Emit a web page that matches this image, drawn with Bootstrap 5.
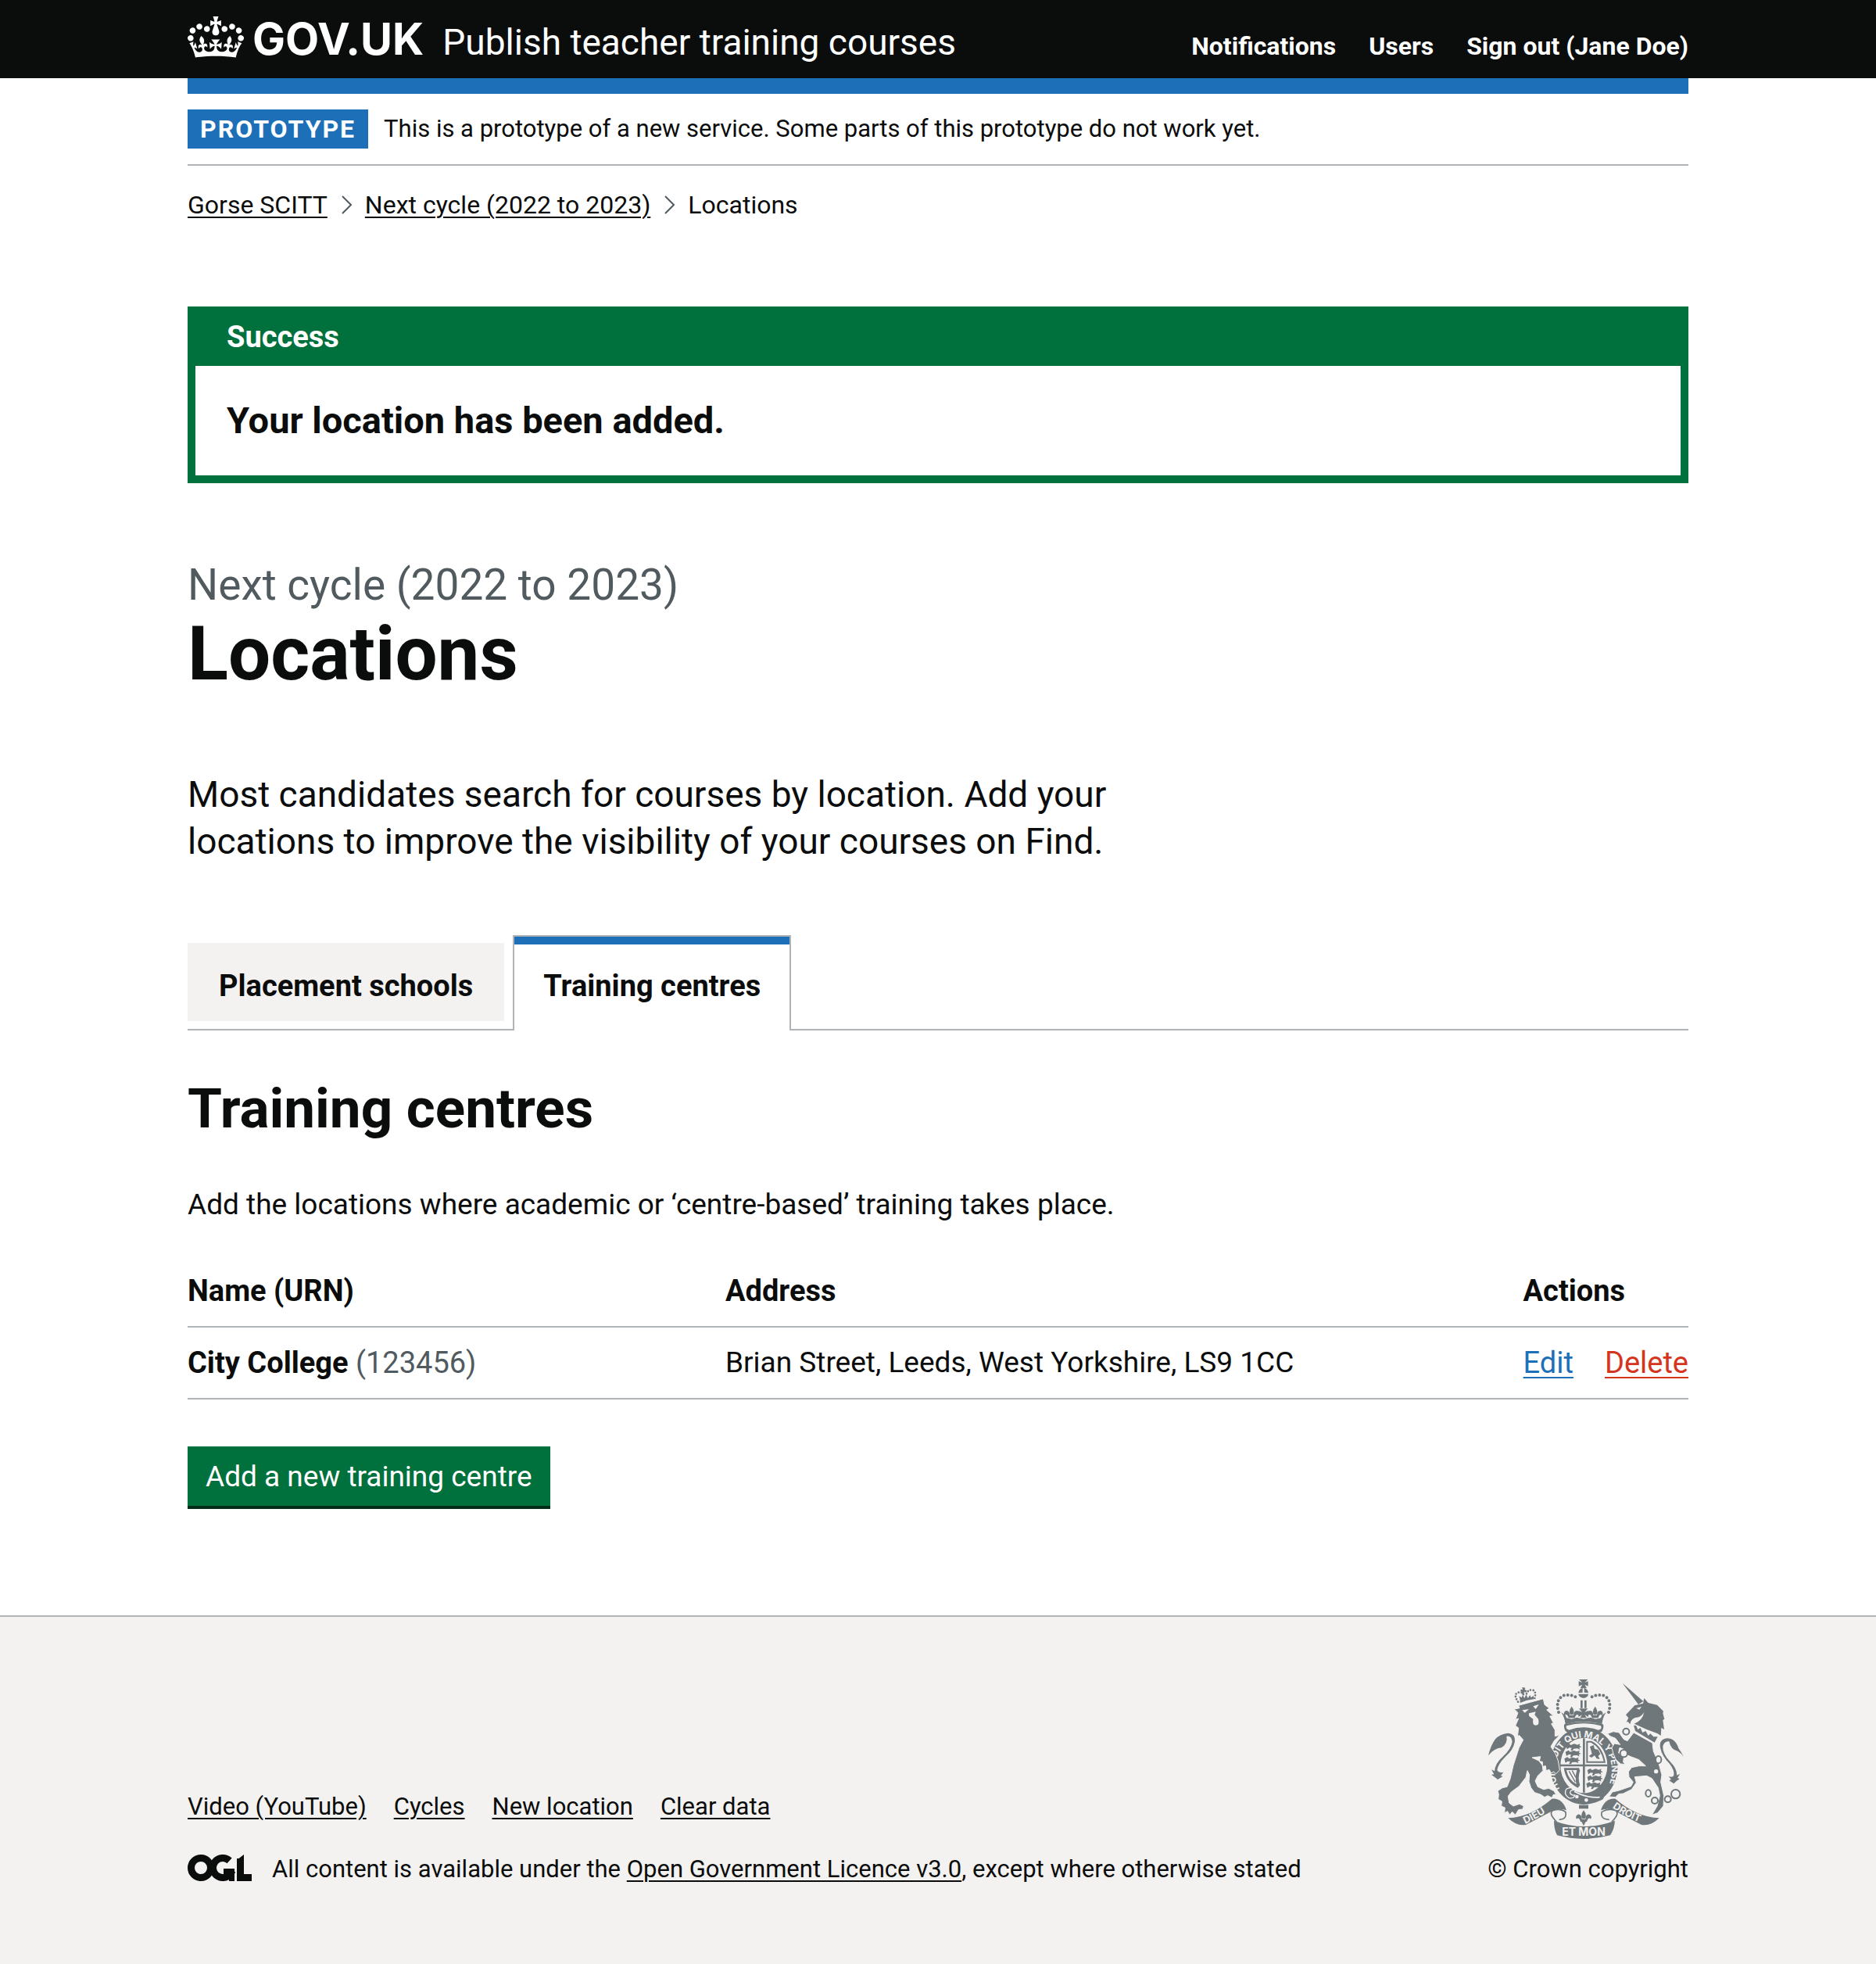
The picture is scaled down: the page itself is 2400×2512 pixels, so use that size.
<!DOCTYPE html>
<html lang="en">
<head>
<meta charset="utf-8">
<meta name="viewport" content="width=device-width, initial-scale=1">
<title>Locations - Publish teacher training courses - GOV.UK</title>
<link rel="stylesheet" href="https://cdn.jsdelivr.net/npm/bootstrap@5.3.0/dist/css/bootstrap.min.css">
<style>
  :root {
    --ink: #0b0c0c;
    --blue: #1d70b8;
    --green: #00703c;
    --red: #d4351c;
    --muted: #505a5f;
    --rule: #b1b4b6;
    --pale: #f3f2f1;
  }
  body {
    font-family: Roboto, "Liberation Sans", sans-serif;
    font-size: 37px;
    line-height: 50px;
    color: var(--ink);
    background: #fff;
  }
  a { color: inherit; text-decoration-thickness: 2px; text-underline-offset: 4px; }
  a:hover { color: inherit; }
  .page-width { width: 80%; margin-inline: auto; }
  .text-s { font-size: 31px; line-height: 40px; }
  .bold-m { font-size: 38px; line-height: 50px; font-weight: 700; }

  .site-header { background: var(--ink); color: #fff; padding: 20px 0; }
  .site-header a { text-decoration: none; }
  .logo-link { gap: 11px; font: 700 56px/60px Inter, sans-serif; }
  .logo-link svg { width: 72px; height: 53px; margin-top: 1px; }
  .service-link { font-size: 46px; line-height: 50px; margin-left: 24px; }
  .site-nav { gap: 42px; font-size: 32px; line-height: 40px; font-weight: 700; }
  .header-bar { height: 20px; background: var(--blue); }

  .phase { gap: 20px; padding: 20px 0; border-bottom: 2px solid var(--rule); }
  .phase p { font-size: 31px; line-height: 50px; }
  .phase-tag { background: var(--blue); color: #fff; font-size: 32px; line-height: 50px; font-weight: 700; letter-spacing: 2px; padding: 0 16px; }

  .crumbs { gap: 17px; padding-top: 30px; font-size: 32px; line-height: 40px; }
  .crumbs li { gap: 18px; }
  .crumbs svg { width: 13px; height: 24px; }

  .notice { margin-top: 110px; border: 10px solid var(--green); border-top: 0; }
  .notice-head { background: var(--green); color: #fff; padding: 14px 40px 12px; }
  .notice-body { padding: 40px; font-size: 47px; line-height: 60px; font-weight: 700; }

  .caption-xl { display: block; margin-bottom: 8px; color: var(--muted); font-size: 55px; line-height: 60px; font-weight: 400; }
  h1 { margin: 100px 0; font-size: 96px; line-height: 100px; font-weight: 700; }
  .intro { font-size: 46px; line-height: 60px; width: 66%; }

  .tab-list { margin-top: 90px; border-bottom: 2px solid var(--rule); }
  .tab-list a { display: block; font-size: 38px; line-height: 60px; font-weight: 700; text-decoration: none; }
  .tab-idle { margin: 10px 11px 10px 0; padding: 25px 40px 15px; background: var(--pale); }
  .tab-current { margin-bottom: -2px; padding: 23px 37px 27px; background: #fff; border: 2px solid var(--rule); border-bottom: 0; box-shadow: inset 0 10px var(--blue); }
  .tab-current a { padding-top: 10px; }

  h2 { margin: 60px 0 58px; font-size: 71px; line-height: 80px; font-weight: 700; }
  .places { margin: 40px 0 60px; width: 100%; }
  .places th, .places td { padding: 20px 0; border-bottom: 2px solid var(--rule); }
  .places thead th { font-size: 38px; }
  .col-name { width: 688px; }
  .col-actions { width: 1%; white-space: nowrap; }
  .places .row-links { gap: 40px; font-size: 38px; }
  .places a { text-underline-offset: 5px; }
  .edit-link, .edit-link:hover { color: var(--blue); }
  .delete-link, .delete-link:hover { color: var(--red); }
  .name-cell { font-size: 38px; font-weight: 400; }
  .urn { color: var(--muted); }
  .add-btn { background: var(--green); color: #fff; border: 0; box-shadow: 0 4px #002d18; padding: 14px 23px 12px; line-height: 50px; }
  main { padding-bottom: 140px; }

  .site-footer { background: var(--pale); border-top: 2px solid var(--rule); padding: 80px 0 96px; }
  .footer-links { gap: 35px; margin-bottom: 35px; }
  .licence { gap: 26px; line-height: 50px; }
  .licence svg { width: 82px; height: 34px; margin-bottom: 4px; }
  .crest-link { text-decoration: none; line-height: 50px; }
  .crest-link svg { display: block; width: 250px; height: 204px; margin: 0 6px 14px auto; }
</style>
<script src="https://cdn.jsdelivr.net/npm/bootstrap@5.3.0/dist/js/bootstrap.bundle.min.js"></script>
</head>
<body>
<header class="site-header">
  <div class="page-width d-flex align-items-baseline">
    <a href="#" class="logo-link d-flex align-items-baseline">
      <svg class="align-self-start" viewBox="0 0 132 97" aria-hidden="true"><path fill="currentColor" fill-rule="evenodd" d="M25 30.2c3.5 1.5 7.7-.2 9.1-3.7 1.5-3.6-.2-7.8-3.9-9.2-3.6-1.4-7.6.3-9.1 3.9-1.4 3.5.3 7.5 3.9 9zM9 39.5c3.6 1.5 7.8-.2 9.2-3.7 1.5-3.6-.2-7.8-3.9-9.1-3.6-1.5-7.6.2-9.1 3.8-1.4 3.5.3 7.5 3.8 9zM4.4 57.2c3.5 1.5 7.7-.2 9.1-3.8 1.5-3.6-.2-7.7-3.9-9.1-3.5-1.5-7.6.3-9.1 3.8-1.4 3.5.3 7.6 3.9 9.1zm38.3-21.4c3.5 1.5 7.7-.2 9.1-3.8 1.5-3.6-.2-7.7-3.9-9.1-3.6-1.5-7.6.3-9.1 3.8-1.3 3.6.4 7.7 3.9 9.1zm64.4-5.6c-3.6 1.5-7.8-.2-9.1-3.7-1.5-3.6.2-7.8 3.8-9.2 3.6-1.4 7.7.3 9.2 3.9 1.3 3.5-.4 7.5-3.9 9zm15.9 9.3c-3.6 1.5-7.7-.2-9.1-3.7-1.5-3.6.2-7.8 3.7-9.1 3.6-1.5 7.7.2 9.2 3.8 1.5 3.5-.3 7.5-3.8 9zm4.7 17.7c-3.6 1.5-7.8-.2-9.2-3.8-1.5-3.6.2-7.7 3.9-9.1 3.6-1.5 7.7.3 9.2 3.8 1.3 3.5-.4 7.6-3.9 9.1zM89.3 35.8c-3.6 1.5-7.8-.2-9.2-3.8-1.4-3.6.2-7.7 3.9-9.1 3.6-1.5 7.7.3 9.2 3.8 1.4 3.6-.3 7.7-3.9 9.1zM69.7 17.7l8.9 4.7V9.3l-8.9 2.8c-.2-.3-.5-.6-.9-.9L72.4 0H59.6l3.5 11.2c-.3.3-.6.5-.9.9l-8.8-2.8v13.1l8.8-4.7c.3.3.6.7.9.9l-5 15.4v.1c-.2.8-.4 1.6-.4 2.4 0 4.1 3.1 7.5 7 8.1h.2c.3 0 .7.1 1 .1.4 0 .7 0 1-.1h.2c4-.6 7.1-4.1 7.1-8.1 0-.8-.1-1.7-.4-2.4V34l-5.1-15.4c.4-.2.7-.6 1-.9zM66 92.8c16.9 0 32.8 1.1 47.1 3.2 4-16.9 8.9-26.7 14-33.5l-9.6-3.4c1 4.9 1.1 7.2 0 10.2-1.5-1.4-3-4.3-4.2-8.7L108.6 76c2.8-2 5-3.2 7.5-3.3-4.4 9.4-10 11.9-13.6 11.2-4.3-.8-6.3-4.6-5.6-7.9 1-4.7 5.7-5.9 8-.5 4.3-8.7-3-11.4-7.6-8.8 7.1-7.2 7.9-13.5 2.1-21.1-8 6.1-8.1 12.3-4.5 20.8-4.7-5.4-12.1-2.5-9.5 6.2 3.4-5.2 7.9-2 7.2 3.1-.6 4.3-6.4 7.8-13.5 7.2-10.3-.9-10.9-8-11.2-13.8 2.5-.5 7.1 1.8 11 7.3L80.2 60c-4.1 4.4-8 5.3-12.3 5.4 1.4-4.4 8-11.6 8-11.6H55.5s6.4 7.2 7.9 11.6c-4.2-.1-8-1-12.3-5.4l1.4 16.4c3.9-5.5 8.5-7.7 10.9-7.3-.3 5.8-.9 12.8-11.1 13.8-7.2.6-12.9-2.9-13.5-7.2-.7-5 3.8-8.3 7.1-3.1 2.7-8.7-4.6-11.6-9.4-6.2 3.7-8.5 3.6-14.7-4.6-20.8-5.8 7.6-5 13.9 2.2 21.1-4.7-2.6-11.9.1-7.7 8.8 2.3-5.5 7.1-4.2 8.1.5.7 3.3-1.3 7.1-5.7 7.9-3.5.7-9-1.8-13.5-11.2 2.5.1 4.7 1.3 7.5 3.3l-4.7-15.4c-1.2 4.4-2.7 7.2-4.3 8.7-1.1-3-.9-5.3 0-10.2l-9.5 3.4c5 6.9 9.9 16.7 14 33.5 14.8-2.1 30.8-3.2 47.7-3.2z"/></svg>
      <span>GOV.UK</span>
    </a>
    <a href="#" class="service-link">Publish teacher training courses</a>
    <nav class="ms-auto" aria-label="Account">
      <ul class="site-nav list-unstyled d-flex mb-0">
        <li><a href="#">Notifications</a></li>
        <li><a href="#">Users</a></li>
        <li><a href="#">Sign out (Jane Doe)</a></li>
      </ul>
    </nav>
  </div>
</header>

<div class="page-width">
  <div class="header-bar"></div>
  <div class="phase d-flex align-items-center">
    <strong class="phase-tag text-uppercase">Prototype</strong>
    <p class="mb-0">This is a prototype of a new service. Some parts of this prototype do not work yet.</p>
  </div>
  <nav aria-label="Breadcrumb">
    <ol class="crumbs list-unstyled d-flex mb-0">
      <li class="d-flex align-items-center"><a href="#">Gorse SCITT</a>
        <svg viewBox="0 0 13 24" aria-hidden="true"><path d="M1 1l11 11L1 23" fill="none" stroke="#505a5f" stroke-width="2"/></svg></li>
      <li class="d-flex align-items-center"><a href="#">Next cycle (2022 to 2023)</a>
        <svg viewBox="0 0 13 24" aria-hidden="true"><path d="M1 1l11 11L1 23" fill="none" stroke="#505a5f" stroke-width="2"/></svg></li>
      <li aria-current="page">Locations</li>
    </ol>
  </nav>

  <main>
    <section class="notice" role="alert" aria-labelledby="notice-title">
      <div class="notice-head"><div id="notice-title" class="bold-m">Success</div></div>
      <div class="notice-body">Your location has been added.</div>
    </section>

    <h1><span class="caption-xl">Next cycle (2022 to 2023)</span>Locations</h1>
    <p class="intro mb-0">Most candidates search for courses by location. Add your locations to improve the visibility of your courses on Find.</p>

    <ul class="tab-list list-unstyled d-flex mb-0">
      <li class="tab-idle"><a href="#">Placement schools</a></li>
      <li class="tab-current"><a href="#" aria-current="page">Training centres</a></li>
    </ul>

    <h2>Training centres</h2>
    <p class="mb-0">Add the locations where academic or ‘centre-based’ training takes place.</p>

    <table class="places">
      <thead>
        <tr><th class="col-name" scope="col">Name (URN)</th><th scope="col">Address</th><th class="col-actions" scope="col">Actions</th></tr>
      </thead>
      <tbody>
        <tr>
          <th class="name-cell" scope="row"><b>City College</b> <span class="urn">(123456)</span></th>
          <td>Brian Street, Leeds, West Yorkshire, LS9 1CC</td>
          <td><div class="row-links d-flex"><a href="#" class="edit-link">Edit</a><a href="#" class="delete-link">Delete</a></div></td>
        </tr>
      </tbody>
    </table>

    <button type="button" class="add-btn d-block">Add a new training centre</button>
  </main>
</div>

<footer class="site-footer">
  <div class="page-width d-flex justify-content-between align-items-end text-s">
    <div>
      <ul class="footer-links list-unstyled d-flex">
        <li><a href="#">Video (YouTube)</a></li>
        <li><a href="#">Cycles</a></li>
        <li><a href="#">New location</a></li>
        <li><a href="#">Clear data</a></li>
      </ul>
      <div class="licence d-flex align-items-center">
        <svg viewBox="0 0 82 34" role="img" aria-label="Open Government Licence">
          <g fill="none" stroke="#0b0c0c" stroke-width="9">
            <circle cx="17" cy="17" r="12.5"/>
            <circle cx="45" cy="17" r="12.5" stroke-dasharray="64 15" transform="rotate(18 45 17)"/>
          </g>
          <g fill="#0b0c0c"><rect x="46" y="18" width="14" height="7"/><rect x="53" y="18" width="7" height="16"/><rect x="63" y="5" width="9" height="29"/><rect x="63" y="25" width="19" height="9"/><path d="M63 7l9-7v9h-9z"/></g>
        </svg>
        <span>All content is available under the <a href="#">Open Government Licence v3.0</a>, except where otherwise stated</span>
      </div>
    </div>
    <a href="#" class="crest-link">
      <svg viewBox="72 54 750 612" aria-hidden="true">
        <defs>
          <path id="garter" d="M346 474A109 127 0 1 1 519 487"/>
          <path id="ribbonLeft" d="M214 609Q272 582 328 542"/>
          <path id="ribbonRight" d="M548 546Q602 586 684 612"/>
          <g id="fleur"><path d="M0-26Q14-8 5 6H-5Q-14-8 0-26zM-7 8Q-8-12-22-10Q-34-4-27 8Q-20 0-14 12L-12 18H12L14 12Q20 0 27 8Q34-4 22-10Q8-12 7 8z"/></g>
          <g id="lions"><path d="M2 6l12-6 6 6 14-5 12 4 10-4-2 8 8 4-9 3 3 8-10-5-14 1-5 7-7-1 4-9-9-1-9 6z"/></g>
        </defs>
        <g fill="#6f777b">
          <!-- garter ring and shield -->
          <ellipse cx="439" cy="386" rx="130" ry="148"/>
          <ellipse cx="439" cy="384" rx="90" ry="106" fill="#f3f2f1"/>
          <path d="M435 280H443V488H435ZM348 380H530V388H348Z"/>
          <use href="#lions" transform="translate(368 300)"/><use href="#lions" transform="translate(366 326)"/><use href="#lions" transform="translate(362 352)"/><use href="#lions" transform="translate(450 396)"/><use href="#lions" transform="translate(450 422)"/><use href="#lions" transform="translate(446 448)"/>
          <path d="M448 290H468Q512 312 522 374H448ZM454 296V368H515Q504 316 466 296Z" fill-rule="evenodd"/>
          <path d="M462 312L476 306L480 320L494 324L502 340L494 348L500 360L488 358L480 346L468 354L458 348L470 340Z"/>
          <path d="M362 394H420L424 404Q414 430 424 460L416 470Q370 450 362 394ZM372 402Q380 440 410 456Q404 430 412 402Z" fill-rule="evenodd"/>
          <path d="M382 406L406 448M394 404L408 430" stroke="#6f777b" stroke-width="4"/>
          <path d="M372 476Q380 468 390 482Q440 516 504 504L526 486L512 514Q446 550 376 510Z"/>
          <path d="M372 474Q400 462 404 478Q386 476 386 490Q390 500 404 498Q400 514 380 508Q360 492 372 474Z" fill="none" stroke="#f3f2f1" stroke-width="4"/>
          <path d="M402 484Q448 510 500 506" fill="none" stroke="#f3f2f1" stroke-width="5"/>
          <circle cx="412" cy="504" r="7" fill="#f3f2f1"/><circle cx="448" cy="517" r="7" fill="#f3f2f1"/>
          <text fill="#f3f2f1" font-family="Inter, sans-serif" font-weight="700" font-size="35"><textPath href="#garter">HONI SOIT QUI MAL Y PENSE</textPath></text>
          <!-- lion -->
          <path stroke="#f3f2f1" stroke-width="3" d="M172 168L192 164L188 154L283 128L288 151L306 165L296 171L322 194L308 195L322 221L314 224L328 248L328 272L346 268L326 288L312 312L330 340L340 366L346 402L332 416L322 408L314 414L306 400L294 404L292 386L280 388L280 370L268 368L272 350L240 354L266 366L280 384L282 404L262 424L252 444L262 466L284 476L304 472L324 482L332 496L322 496L316 508L300 500L288 506L274 496L250 488L236 470L228 446L230 420L222 404L216 430L190 464L160 486L148 502L152 528L168 540L192 532L208 540L204 552L188 554L176 574L164 562L154 574L146 560L134 566L136 546L122 540L124 522L110 514L112 494L108 482L126 470L144 466L156 436L168 384L190 316L206 286L190 268L184 276L188 240L176 232L188 204L176 208L186 182Z"/>
          <path d="M72 346Q80 310 98 284Q114 264 148 260Q176 262 174 292Q168 326 138 350Q108 380 106 402Q112 414 130 410L120 424L128 426L108 438L98 430L84 420L94 418L84 400L96 406Q98 376 128 350Q160 322 164 292Q160 268 142 272Q148 300 122 316Q92 320 72 346Z"/>
          <path d="M194 132L190 118L200 124L204 114L211 126L217 112L224 126L232 114L236 124L246 116V130Q220 132 194 144Z"/>
          <path d="M202 84L214 86L212 94L219 96L218 104L210 102L208 112L200 110L202 102L195 100L197 92L204 94Z"/>
          <path d="M186 140Q166 110 188 104Q204 100 208 116M250 126Q258 98 240 94Q222 94 218 112" fill="none" stroke="#6f777b" stroke-width="8" stroke-linecap="round" stroke-dasharray="0 11"/>
          <g fill="#f3f2f1"><path d="M186 154L284 128L283 124L186 149Z"/><path d="M202 172L228 168L212 182ZM244 157L266 150L254 168ZM228 184L254 178L250 190L264 206Q270 230 254 230Q240 230 244 206L228 194Z"/></g>
          <!-- large crown -->
          <path d="M420 54H454L442 67L455 61V80L442 74L450 88H425L433 74L419 80V61L433 67ZM418 106Q420 90 434 88V104ZM456 106Q454 90 440 88V104ZM418 110H456Q456 122 438 126Q418 122 418 110Z"/>
          <path d="M426 134H434V164H426ZM441 134H449V164H441ZM420 166H454L442 180L456 174V198L442 190L450 202H424L432 190L418 198V174L432 180Z"/>
          <path d="M342 180Q328 132 360 116Q392 108 418 128M534 180Q548 132 516 116Q484 108 458 128" fill="none" stroke="#6f777b" stroke-width="12" stroke-linecap="round" stroke-dasharray="0 15"/>
          <use href="#fleur" transform="translate(392 184)"/><use href="#fleur" transform="translate(482 184)"/>
          <path d="M352 180L368 192L372 202L392 206L412 200L438 206L464 200L484 206L504 202L508 192L524 180Q510 202 508 226Q438 206 368 226Q366 202 352 180Z"/>
          <path d="M364 226Q438 208 512 226Q518 236 508 254L496 260Q438 236 380 260L368 252Q360 240 364 226Z"/>
          <path d="M372 232Q438 214 504 232Q510 246 494 248Q438 228 382 248Q368 244 372 232Z" fill="#f3f2f1"/>
          <!-- unicorn -->
          <path d="M587 68L667 138L648 150Z"/>
          <path d="M600 190L634 154L666 146L670 126L686 144L720 152L744 176L742 184L748 206L742 210L747 246L736 240L734 270L722 262L680 246L632 224Q664 212 670 180Q656 202 638 200Q618 206 616 226L608 216L602 218L610 202Z"/>
          <path d="M640 164L660 159L652 170Z" fill="#f3f2f1"/>
          <path d="M630 230L636 252L710 296L722 274L706 274L694 262L686 270L676 252L664 258L656 240L646 246L640 232Z"/>
          <path stroke="#f3f2f1" stroke-width="3" d="M630 258L702 298L706 330L726 376L738 420L734 448L746 500L744 540L722 566L700 574L720 540L730 500L724 470L700 434L680 424L634 428L640 450L622 476L590 492L572 494L560 506L536 504L548 486L574 480L620 464L628 448L612 428L610 408L622 392L650 386L676 386L650 362L618 350Q600 344 592 322L576 316L572 336L592 354L590 372L600 380L580 378L562 362L552 340L546 316L556 300L578 304L560 280L540 272L530 262L552 254L574 258L592 284L606 290Z"/>
          <path d="M822 352Q814 334 802 318Q790 280 758 280Q726 284 732 316Q738 348 768 378Q788 404 784 422Q780 432 764 426L774 438L766 442L784 454L794 444L806 436L798 432L808 416L796 422Q796 396 770 370Q740 340 742 310Q748 290 766 292Q772 324 800 330Q812 336 822 352Z"/>
          <g fill="none" stroke="#6f777b" stroke-width="6">
            <circle cx="601" cy="254" r="12"/><circle cx="592" cy="338" r="14" fill="#f3f2f1"/><ellipse cx="725" cy="362" rx="11" ry="14" fill="#f3f2f1"/><ellipse cx="686" cy="491" rx="10" ry="13"/><circle cx="711" cy="519" r="12"/><circle cx="761" cy="514" r="12"/><circle cx="791" cy="494" r="17"/>
          </g>
          <circle cx="716" cy="407" r="8" fill="#f3f2f1"/><circle cx="695" cy="442" r="8" fill="#f3f2f1"/>
          <!-- motto ribbon -->
          <path d="M148 586Q236 582 316 512Q356 508 372 556Q340 544 312 562Q260 590 216 612Q180 618 148 586Z"/>
          <path d="M728 586Q640 582 560 512Q520 508 504 556Q536 544 564 562Q616 590 660 612Q696 618 728 586Z"/>
          <path d="M324 596Q438 640 558 596Q556 628 540 652Q438 680 336 652Q324 628 324 596Z"/>
          <path d="M334 600Q300 566 322 556Q350 548 368 562Q376 590 344 592M546 600Q580 566 558 556Q530 548 508 562Q500 590 536 592" fill="#f3f2f1" stroke="#6f777b" stroke-width="5"/>
          <g fill="#f3f2f1" font-family="Inter, sans-serif" font-weight="700" font-size="38">
            <text><textPath href="#ribbonLeft">DIEU</textPath></text>
            <text><textPath href="#ribbonRight">DROIT</textPath></text>
            <text x="438" y="655" text-anchor="middle" font-size="42">ET MON</text>
          </g>
          <path d="M420 536H456V550H420Z"/>
          <use href="#fleur" transform="translate(438 582)"/>
          <path d="M430 600H446L438 616Z"/>
        </g>
      </svg>
      <span>© Crown copyright</span>
    </a>
  </div>
</footer>
</body>
</html>
